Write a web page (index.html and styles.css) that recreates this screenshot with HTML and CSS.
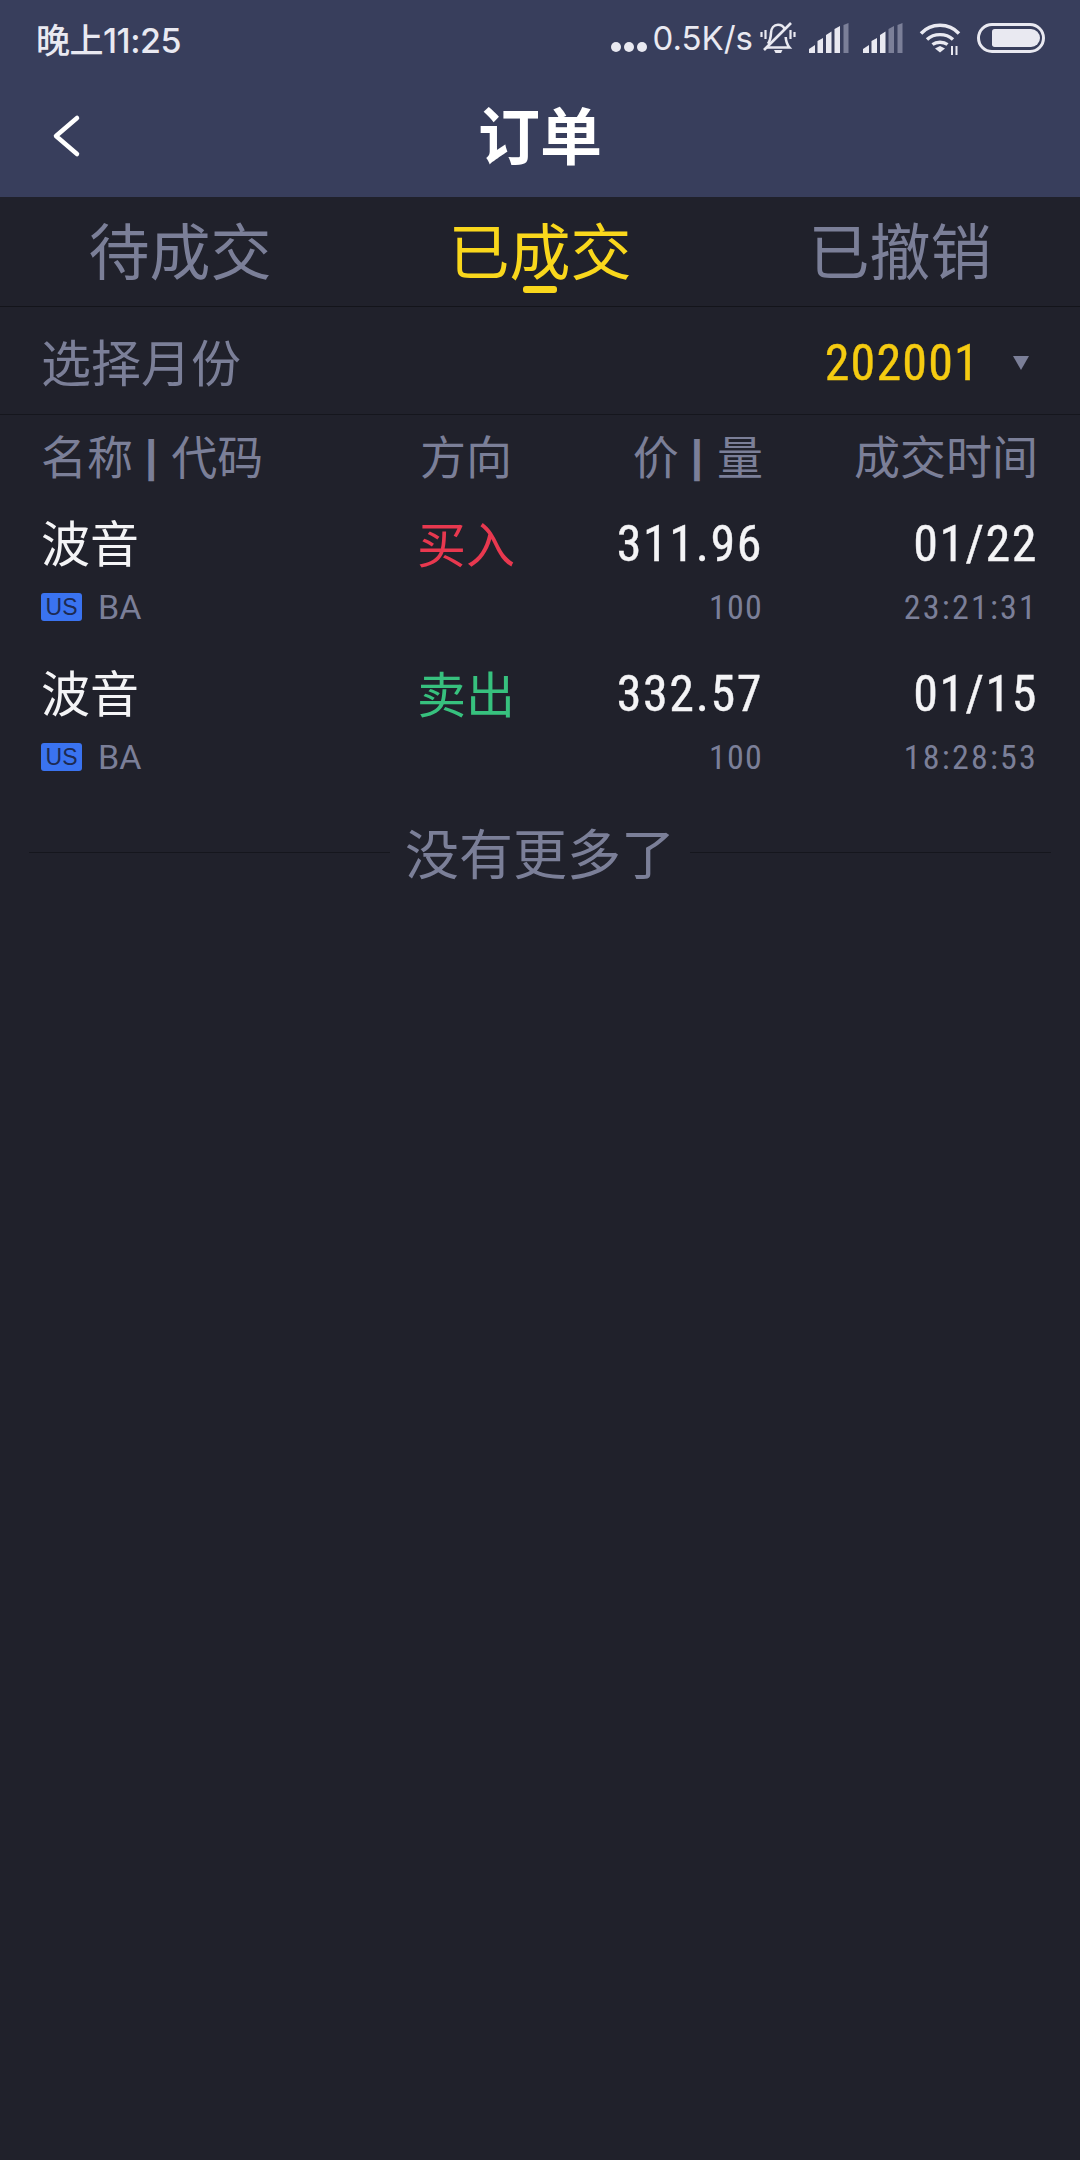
FILE: index.html
```html
<!DOCTYPE html>
<html lang="zh-CN">
<head>
<meta charset="utf-8">
<title>订单</title>
<link rel="stylesheet" href="styles.css">
</head>
<body>
<header class="app-header">
  <div class="status-bar">
    <span class="clock">晚上11:25</span>
    <div class="status-right">
      <span class="dots"><i></i><i></i><i></i></span>
      <span class="speed">0.5K/s</span>
      <svg class="ic-bell" width="36" height="32" viewBox="0 0 36 32" fill="none" stroke="#e9e9f1" stroke-width="2.600">
        <path d="M7 25.500h22.500c-2.500-3-3.500-5-3.800-10.500M24.500 6.500C23 4 20.800 2.800 18 2.800c-4 0-6.800 3.200-7 8-.2 5.500-1 8-3 11"/>
        <path d="M4 28 L31 1"/>
        <path d="M14 28h8.500l-1.500 3h-5.500z" fill="#e9e9f1" stroke="none"/>
        <path d="M5.500 8v9M1.500 10v5M30.500 8v9M34.500 10v5" stroke-width="2.200"/>
      </svg>
      <svg class="ic-signal" width="40" height="30" viewBox="0 0 40 30">
        <path d="M0 30v-4l6-4v8zM8.500 30V18l5.500-3v15zM17 30V12l5.500-3.500V30zM25.500 30V6l5.500-3v27z" fill="#e9e9f1"/>
        <path d="M34.500 30V2l5-2v30z" fill="#7b7f98"/>
      </svg>
      <svg class="ic-signal second" width="40" height="30" viewBox="0 0 40 30">
        <path d="M0 30v-4l6-4v8zM8.500 30V18l5.500-3v15zM17 30V12l5.500-3.500V30z" fill="#e9e9f1"/>
        <path d="M25.500 30V6l5.500-3v27zM34.500 30V2l5-2v30z" fill="#7b7f98"/>
      </svg>
      <svg class="ic-wifi" width="42" height="32" viewBox="0 0 42 32" fill="none" stroke="#e9e9f1" stroke-width="3.400">
        <path d="M2 10.500C12 -.5 30 -.5 40 10.500"/>
        <path d="M8 16.500c7-6.500 19-6.500 26 0"/>
        <path d="M13.500 21.500c4-3 11-3 15 0"/>
        <path d="M16 25.500l5-2.500 5 2.500-5 4z" fill="#e9e9f1" stroke="none"/>
        <path d="M33 23v9M37.500 23v9" stroke-width="2"/>
      </svg>
      <span class="battery"><i></i></span>
    </div>
  </div>
  <div class="nav-bar">
    <svg class="ic-back" width="30" height="44" viewBox="0 0 30 44" fill="none" stroke="#ffffff" stroke-width="4.500" stroke-linecap="round" stroke-linejoin="round">
      <path d="M26 4 L5 22 L26 40"/>
    </svg>
    <h1 class="title">订单</h1>
  </div>
</header>

<nav class="tabs">
  <a class="tab">待成交</a>
  <a class="tab active">已成交</a>
  <a class="tab">已撤销</a>
</nav>

<section class="filter">
  <span class="filter-label">选择月份</span>
  <div class="filter-value">
    <span class="month">202001</span>
    <span class="caret"></span>
  </div>
</section>

<section class="orders">
  <div class="row head">
    <span>名称<span class="sep">|</span>代码</span>
    <span class="center">方向</span>
    <span class="right">价<span class="sep">|</span>量</span>
    <span class="right">成交时间</span>
  </div>

  <article class="row order">
    <div class="cell">
      <span class="main">波音</span>
      <span class="sub"><b class="badge">US</b>BA</span>
    </div>
    <div class="cell center"><span class="side buy">买入</span></div>
    <div class="cell right">
      <span class="main num">311.96</span>
      <span class="sub num qty">100</span>
    </div>
    <div class="cell right">
      <span class="main num date">01/22</span>
      <span class="sub num clock-time">23:21:31</span>
    </div>
  </article>

  <article class="row order">
    <div class="cell">
      <span class="main">波音</span>
      <span class="sub"><b class="badge">US</b>BA</span>
    </div>
    <div class="cell center"><span class="side sell">卖出</span></div>
    <div class="cell right">
      <span class="main num">332.57</span>
      <span class="sub num qty">100</span>
    </div>
    <div class="cell right">
      <span class="main num date">01/15</span>
      <span class="sub num clock-time">18:28:53</span>
    </div>
  </article>
</section>

<div class="end-note">
  <i class="rule"></i>
  <span>没有更多了</span>
  <i class="rule"></i>
</div>
</body>
</html>
```

FILE: styles.css
```css
* { box-sizing: border-box; }
html, body { margin: 0; padding: 0; }
body {
  width: 1080px;
  height: 2160px;
  overflow: hidden;
  background: #20212b;
  color: #7b7f98;
  font-family: "Noto Sans CJK SC", "Noto Sans", sans-serif;
}

/* header */
.app-header { height: 197px; background: #383e5c; }
.status-bar {
  height: 76px;
  display: flex;
  align-items: center;
  justify-content: space-between;
  padding: 0 35px 0 36px;
  color: #e9e9f1;
}
.clock { font-size: 34px; font-weight: 500; font-family: "Inter", "Noto Sans CJK SC", sans-serif; letter-spacing: -0.5px; }
.status-right { display: flex; align-items: center; }
.dots { display: flex; gap: 3px; margin-top: 18px; }
.dots i { width: 10px; height: 10px; border-radius: 50%; background: #e9e9f1; }
.speed { font-family: "Inter", sans-serif; font-size: 33px; margin-left: 5px; margin-right: 7px; }
.ic-bell { display: block; }
.ic-signal { display: block; margin-left: 13px; }
.ic-signal.second { margin-left: 14px; }
.ic-wifi { display: block; margin-left: 16px; margin-top: 2px; }
.battery {
  width: 68px;
  height: 30px;
  margin-left: 16px;
  border: 3px solid #e9e9f1;
  border-radius: 15px;
  padding: 3px 2px 3px 12px;
  display: flex;
}
.battery i { flex: 1; background: #e9e9f1; border-radius: 3px 10px 10px 3px; }

.nav-bar {
  position: relative;
  height: 121px;
  padding-bottom: 7px;
  display: flex;
  align-items: center;
  justify-content: center;
}
.ic-back { position: absolute; left: 51px; top: 38px; }
.title { margin: 0; font-size: 62px; font-weight: 700; color: #ffffff; line-height: 1; }

/* tabs */
.tabs {
  height: 110px;
  display: grid;
  grid-template-columns: repeat(3, 1fr);
  border-bottom: 1px solid #13141a;
}
.tab {
  position: relative;
  font-size: 61px;
  line-height: 103px;
  text-align: center;
}
.tab.active { color: #f9d71c; }
.tab.active::after {
  content: "";
  position: absolute;
  left: 163px;
  bottom: 13px;
  width: 34px;
  height: 7px;
  border-radius: 3px;
  background: #f9d71c;
}

/* month filter */
.filter {
  height: 108px;
  display: flex;
  align-items: center;
  justify-content: space-between;
  padding: 0 51px 2px 41px;
  border-bottom: 1px solid #15161d;
}
.filter-label { font-size: 50px; }
.filter-value { display: flex; align-items: center; gap: 33px; margin-top: 6px; }
.month { font-family: "Roboto", sans-serif; font-size: 50px; color: #f5cb11; font-stretch: 85%; letter-spacing: 1.200px; -webkit-text-stroke: 0.4px currentColor; }
.caret {
  width: 0;
  height: 0;
  border-left: 8.500px solid transparent;
  border-right: 8.500px solid transparent;
  border-top: 14px solid #7b7f98;
}

/* table */
.row {
  display: grid;
  grid-template-columns: 339px 172px 211px 1fr;
  padding: 0 42px 0 41px;
}
.head { height: 78px; margin-bottom: 10px; align-items: center; font-size: 46px; }
.sep {
  font-family: "Liberation Sans", sans-serif;
  font-size: 44px;
  font-weight: 700;
  margin: 0 14px 0 12px;
  vertical-align: 3px;
}
.center { text-align: center; }
.right { text-align: right; }
.order { height: 150px; }
.cell { display: flex; flex-direction: column; }
.cell.center { align-items: center; }
.cell.right { align-items: flex-end; }
.main { height: 75px; display: flex; align-items: center; font-size: 49px; color: #f4f4f6; line-height: 1; }
.sub { height: 45px; margin-top: 6px; display: flex; align-items: center; font-size: 33px; line-height: 1; }
.num { font-family: "Roboto", sans-serif; font-stretch: 85%; }
.main.num { font-size: 50px; letter-spacing: 1.600px; padding-top: 6px; -webkit-text-stroke: 0.4px currentColor; }
.main.date { letter-spacing: 1.500px; }
.sub.num { font-size: 34px; }
.sub.qty { letter-spacing: 1.200px; }
.sub.clock-time { letter-spacing: 2.200px; }
.badge {
  width: 41px;
  height: 28px;
  margin-right: 16px;
  border-radius: 3px;
  background: #3a73f0;
  color: #1d2a52;
  font-family: "Liberation Sans", sans-serif;
  font-weight: 400;
  font-size: 23px;
  line-height: 28px;
  text-align: center;
}
.sub:not(.num) { font-family: "Roboto", sans-serif; font-size: 34px; }
.side { height: 75px; padding-top: 2px; display: flex; align-items: center; font-size: 49px; line-height: 1; }
.buy { color: #e8384f; }
.sell { color: #37c17e; }

/* end of list */
.end-note {
  display: flex;
  align-items: center;
  gap: 15px;
  padding: 0 29px;
  margin-top: 12px;
  font-size: 54px;
  line-height: 74px;
}
.rule { flex: 1; height: 1px; background: #15161d; }
```
